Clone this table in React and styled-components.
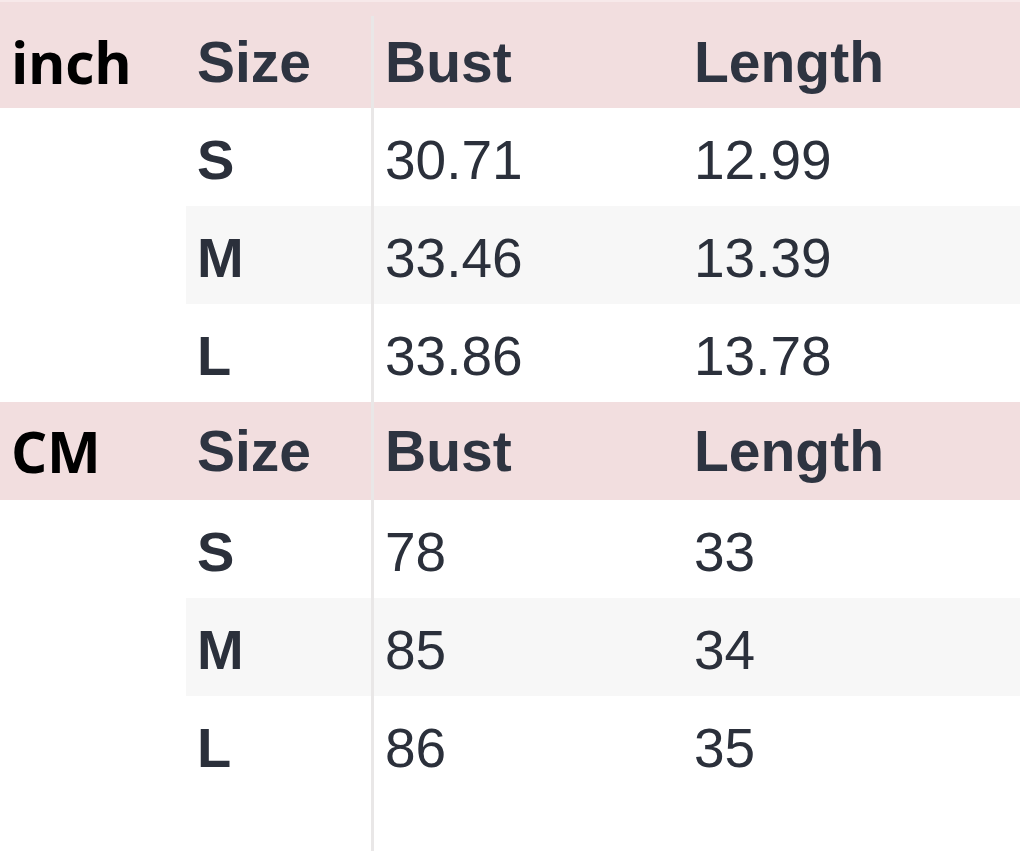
import React from "react";
import styled, { createGlobalStyle } from "styled-components";

const Global = createGlobalStyle`
  html, body { margin: 0; padding: 0; background: #ffffff; }
  body { font-family: "Liberation Sans", Arial, sans-serif; }
`;

const Table = styled.div`
  width: 1020px;
  min-height: 851px;
  display: flex;
  flex-direction: column;
  background: #fff;
`;

const Row = styled.div`
  display: grid;
  grid-template-columns: 186px 185px 312px 1fr;
  height: ${(p) => p.$h || 98}px;
  flex: ${(p) => (p.$fill ? "1 1 auto" : "0 0 auto")};
  background: ${(p) => (p.$head ? "#f2dedf" : "#ffffff")};
  box-sizing: border-box;
  padding-top: ${(p) => p.$pt || 0}px;
  border-top: ${(p) => (p.$top ? "2px solid #f7e9ea" : "none")};
`;

const Cell = styled.div`
  display: flex;
  align-items: center;
  padding-left: 11px;
  padding-top: ${(p) => (p.$data ? 5 : 0)}px;
  box-sizing: border-box;
  background: ${(p) => (p.$shade ? "#f7f7f7" : "transparent")};
  ${(p) => (p.$divider ? "border-left: 3px solid #e9e7e7;" : "")}
`;

const Unit = styled.span`
  font-family: "Open Sans", "Liberation Sans", sans-serif;
  font-weight: 700;
  font-size: 57px;
  color: #000;
  letter-spacing: -0.3px;
`;

const Head = styled.span`
  font-family: "Liberation Sans", Arial, sans-serif;
  font-weight: 700;
  font-size: 57px;
  color: #2e3441;
`;

const SizeTxt = styled.span`
  font-family: "Liberation Sans", Arial, sans-serif;
  font-weight: 700;
  font-size: 56px;
  color: #2b303b;
`;

const Val = styled.span`
  font-family: "Liberation Sans", Arial, sans-serif;
  font-weight: 400;
  font-size: 55px;
  color: #2b303b;
`;

const groups = [
  {
    unit: "inch",
    rows: [
      ["S", "30.71", "12.99"],
      ["M", "33.46", "13.39"],
      ["L", "33.86", "13.78"],
    ],
  },
  {
    unit: "CM",
    rows: [
      ["S", "78", "33"],
      ["M", "85", "34"],
      ["L", "86", "35"],
    ],
  },
];

export default function App() {
  return (
    <>
      <Global />
      <Table>
        {groups.map((g, gi) => (
          <React.Fragment key={g.unit}>
            <Row $head $h={gi === 0 ? 108 : 98} $pt={gi === 0 ? 14 : 0} $top={gi === 0}>
              <Cell>
                <Unit>{g.unit}</Unit>
              </Cell>
              <Cell>
                <Head>Size</Head>
              </Cell>
              <Cell $divider>
                <Head>Bust</Head>
              </Cell>
              <Cell>
                <Head>Length</Head>
              </Cell>
            </Row>
            {g.rows.map((r, i) => (
              <Row key={r[0]}>
                <Cell />
                <Cell $data $shade={i === 1}>
                  <SizeTxt>{r[0]}</SizeTxt>
                </Cell>
                <Cell $data $divider $shade={i === 1}>
                  <Val>{r[1]}</Val>
                </Cell>
                <Cell $data $shade={i === 1}>
                  <Val>{r[2]}</Val>
                </Cell>
              </Row>
            ))}
          </React.Fragment>
        ))}
        <Row $fill $h={57}>
          <Cell />
          <Cell />
          <Cell $divider />
          <Cell />
        </Row>
      </Table>
    </>
  );
}
